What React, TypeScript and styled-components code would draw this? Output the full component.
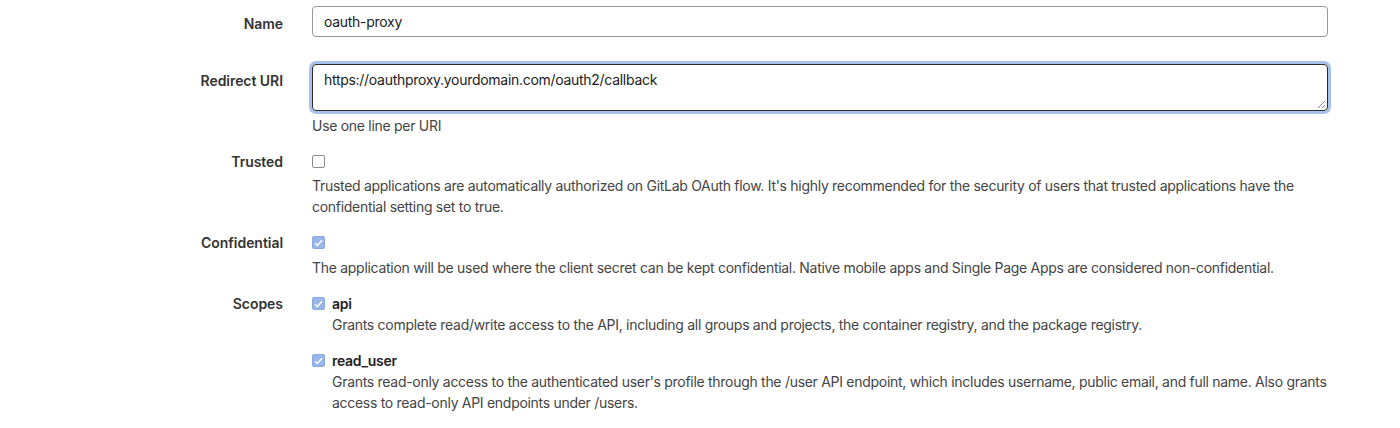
import React from "react";
import styled, { createGlobalStyle } from "styled-components";

const GlobalStyle = createGlobalStyle`
  body {
    margin: 0;
    background: #fff;
    font-family: Inter, "Noto Sans", "Liberation Sans", sans-serif;
    font-size: 14px;
    letter-spacing: -0.29px;
    color: #333;
  }
`;

const Form = styled.form`
  display: flex;
  flex-direction: column;
  padding-top: 6px;
`;

const Row = styled.div<{ $gap?: number }>`
  display: grid;
  grid-template-columns: 283px 1016px;
  column-gap: 29px;
  margin-top: ${(p) => p.$gap ?? 15}px;
`;

const Label = styled.label<{ $top?: number }>`
  text-align: right;
  font-weight: 600;
  letter-spacing: -0.05px;
  color: #333;
  line-height: 21px;
  padding-top: ${(p) => p.$top ?? 0}px;
`;

const Field = styled.div`
  display: flex;
  flex-direction: column;
`;

const TextInput = styled.div`
  box-sizing: border-box;
  height: 31px;
  border: 1px solid #979797;
  border-radius: 4px;
  padding: 0 11px;
  line-height: 29px;
  color: #222;
`;

const TextArea = styled.div`
  position: relative;
  box-sizing: border-box;
  height: 47px;
  border: 1px solid #2b2b2b;
  border-radius: 4px;
  padding: 4px 11px;
  line-height: 21px;
  color: #222;
  box-shadow: 0 0 0 3px #a7c2ec;
`;

const Grip = styled.svg`
  position: absolute;
  right: 1px;
  bottom: 1px;
`;

const Help = styled.p<{ $top?: number }>`
  margin: ${(p) => p.$top ?? 3}px 0 0;
  line-height: 21px;
  color: #444;
`;

const CheckLine = styled.div<{ $top?: number }>`
  display: flex;
  align-items: center;
  gap: 7px;
  height: 21px;
  margin-top: ${(p) => p.$top ?? 0}px;
`;

const Box = styled.span<{ $checked?: boolean }>`
  box-sizing: border-box;
  width: 13px;
  height: 13px;
  border-radius: 2px;
  border: 1px solid ${(p) => (p.$checked ? "#8aa9de" : "#8a8a8a")};
  background: ${(p) => (p.$checked ? "#98b6e8" : "#fff")};
  display: flex;
  align-items: center;
  justify-content: center;
`;

const ScopeName = styled.span`
  font-weight: 600;
  color: #222;
`;

const ScopeDesc = styled.p`
  margin: 0;
  padding-left: 20px;
  line-height: 21px;
  color: #444;
`;

const Checkbox = ({ checked }: { checked?: boolean }) => (
  <Box $checked={checked}>
    {checked && (
      <svg width="9" height="8" viewBox="0 0 9 8">
        <path d="M1 4.2 L3.4 6.5 L8 1.2" fill="none" stroke="#fff" strokeWidth="1.4" />
      </svg>
    )}
  </Box>
);

export default function App() {
  return (
    <>
      <GlobalStyle />
      <Form>
        <Row $gap={0}>
          <Label $top={7}>Name</Label>
          <Field>
            <TextInput>oauth-proxy</TextInput>
          </Field>
        </Row>
        <Row $gap={27}>
          <Label $top={6}>Redirect URI</Label>
          <Field>
            <TextArea>
              https://oauthproxy.yourdomain.com/oauth2/callback
              <Grip width="9" height="9" viewBox="0 0 9 9">
                <path d="M1 8 L8 1 M5 8 L8 5" stroke="#888" strokeWidth="1" />
              </Grip>
            </TextArea>
            <Help $top={4}>Use one line per URI</Help>
          </Field>
        </Row>
        <Row $gap={15}>
          <Label>Trusted</Label>
          <Field>
            <CheckLine>
              <Checkbox />
            </CheckLine>
            <Help>
              Trusted applications are automatically authorized on GitLab OAuth flow. It's highly recommended for the
              security of users that trusted applications have the confidential setting set to true.
            </Help>
          </Field>
        </Row>
        <Row>
          <Label>Confidential</Label>
          <Field>
            <CheckLine>
              <Checkbox checked />
            </CheckLine>
            <Help $top={4}>
              The application will be used where the client secret can be kept confidential. Native mobile apps and
              Single Page Apps are considered non-confidential.
            </Help>
          </Field>
        </Row>
        <Row>
          <Label>Scopes</Label>
          <Field>
            <CheckLine>
              <Checkbox checked />
              <ScopeName>api</ScopeName>
            </CheckLine>
            <ScopeDesc>
              Grants complete read/write access to the API, including all groups and projects, the container registry,
              and the package registry.
            </ScopeDesc>
            <CheckLine $top={15}>
              <Checkbox checked />
              <ScopeName>read_user</ScopeName>
            </CheckLine>
            <ScopeDesc>
              Grants read-only access to the authenticated user's profile through the /user API endpoint, which includes
              username, public email, and full name. Also grants access to read-only API endpoints under /users.
            </ScopeDesc>
          </Field>
        </Row>
      </Form>
    </>
  );
}
